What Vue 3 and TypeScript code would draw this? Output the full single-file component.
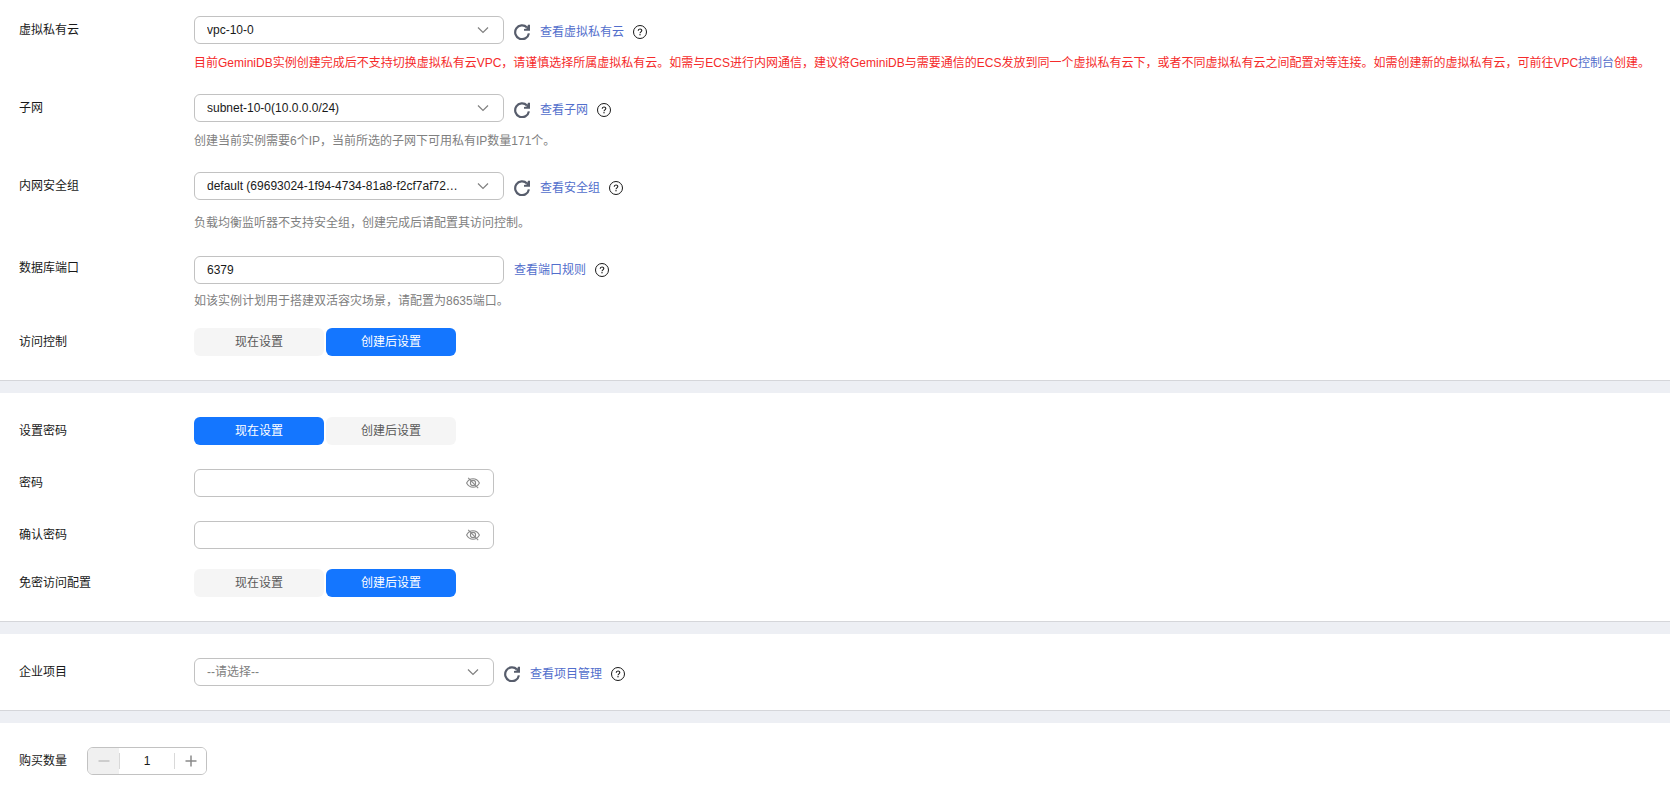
<script setup lang="ts">
import { ref } from 'vue'

type SetupTime = 'now' | 'later'

const setupOptions: { value: SetupTime; text: string }[] = [
  { value: 'now', text: '现在设置' },
  { value: 'later', text: '创建后设置' },
]

const vpc = ref('vpc-10-0')
const subnet = ref('subnet-10-0(10.0.0.0/24)')
const securityGroup = ref('default (69693024-1f94-4734-81a8-f2cf7af72…')
const port = ref('6379')
const accessControl = ref<SetupTime>('later')
const passwordSetup = ref<SetupTime>('now')
const passwordless = ref<SetupTime>('later')
const password = ref('')
const confirmPassword = ref('')
const showPassword = ref(false)
const showConfirm = ref(false)
const project = ref('')
const quantity = ref(1)
</script>

<template>
  <svg class="sprite" aria-hidden="true">
    <symbol id="icon-chevron" viewBox="0 0 12 12">
      <path d="M1 3.5 6 8.5 11 3.5" fill="none" stroke="currentColor" stroke-width="1.2" />
    </symbol>
    <symbol id="icon-refresh" viewBox="0 0 16 16">
      <path d="M13 3.4A6.9 6.9 0 1 0 14.9 9.4" fill="none" stroke="currentColor" stroke-width="2.2" />
      <path d="M16 0.8V6.8H10V5L12.6 4.4 14 0.8Z" fill="currentColor" />
    </symbol>
    <symbol id="icon-help" viewBox="0 0 14 14">
      <circle cx="7" cy="7" r="6.5" fill="none" stroke="currentColor" stroke-width="1" />
      <path d="M5.2 5.8C5.2 3.4 8.8 3.4 8.8 5.6 8.8 6.8 7 6.9 7 8.3" fill="none" stroke="currentColor" stroke-width="1.1" />
      <rect x="6.4" y="9.1" width="1.2" height="1.2" fill="currentColor" />
    </symbol>
    <symbol id="icon-eye-off" viewBox="0 0 14 12">
      <g fill="none" stroke="currentColor" stroke-width="1.1">
        <path d="M0.6 6C3.6 0.4 10.4 0.4 13.4 6 10.4 11.6 3.6 11.6 0.6 6Z" />
        <circle cx="7" cy="6" r="2.6" />
        <path d="M2.2 0.8 12.2 11.2" />
      </g>
    </symbol>
  </svg>

  <form class="page" @submit.prevent>
    <section class="panel network">
      <div class="row">
        <label class="name" for="vpc">虚拟私有云</label>
        <div class="content">
          <div class="line">
            <div class="field wide">
              <select id="vpc" v-model="vpc"><option>vpc-10-0</option></select>
              <svg class="chevron"><use href="#icon-chevron" /></svg>
            </div>
            <div class="actions low">
              <button class="icon" type="button" aria-label="刷新"><svg class="refresh"><use href="#icon-refresh" /></svg></button>
              <a href="#">查看虚拟私有云</a>
              <button class="icon" type="button" aria-label="帮助"><svg class="help"><use href="#icon-help" /></svg></button>
            </div>
          </div>
          <p class="hint warning">目前GeminiDB实例创建完成后不支持切换虚拟私有云VPC，请谨慎选择所属虚拟私有云。如需与ECS进行内网通信，建议将GeminiDB与需要通信的ECS发放到同一个虚拟私有云下，或者不同虚拟私有云之间配置对等连接。如需创建新的虚拟私有云，可前往VPC<a href="#">控制台</a>创建。</p>
        </div>
      </div>

      <div class="row">
        <label class="name" for="subnet">子网</label>
        <div class="content">
          <div class="line">
            <div class="field wide">
              <select id="subnet" v-model="subnet"><option>subnet-10-0(10.0.0.0/24)</option></select>
              <svg class="chevron"><use href="#icon-chevron" /></svg>
            </div>
            <div class="actions low">
              <button class="icon" type="button" aria-label="刷新"><svg class="refresh"><use href="#icon-refresh" /></svg></button>
              <a href="#">查看子网</a>
              <button class="icon" type="button" aria-label="帮助"><svg class="help"><use href="#icon-help" /></svg></button>
            </div>
          </div>
          <p class="hint">创建当前实例需要6个IP，当前所选的子网下可用私有IP数量171个。</p>
        </div>
      </div>

      <div class="row security">
        <label class="name" for="group">内网安全组</label>
        <div class="content">
          <div class="line">
            <div class="field wide">
              <select id="group" v-model="securityGroup"><option>default (69693024-1f94-4734-81a8-f2cf7af72…</option></select>
              <svg class="chevron"><use href="#icon-chevron" /></svg>
            </div>
            <div class="actions low">
              <button class="icon" type="button" aria-label="刷新"><svg class="refresh"><use href="#icon-refresh" /></svg></button>
              <a href="#">查看安全组</a>
              <button class="icon" type="button" aria-label="帮助"><svg class="help"><use href="#icon-help" /></svg></button>
            </div>
          </div>
          <p class="hint">负载均衡监听器不支持安全组，创建完成后请配置其访问控制。</p>
        </div>
      </div>

      <div class="row port">
        <label class="name" for="port">数据库端口</label>
        <div class="content">
          <div class="line">
            <div class="field wide"><input id="port" v-model="port" type="text" inputmode="numeric" /></div>
            <div class="actions">
              <a href="#">查看端口规则</a>
              <button class="icon" type="button" aria-label="帮助"><svg class="help"><use href="#icon-help" /></svg></button>
            </div>
          </div>
          <p class="hint">如该实例计划用于搭建双活容灾场景，请配置为8635端口。</p>
        </div>
      </div>

      <div class="row">
        <span id="access-name" class="name">访问控制</span>
        <div class="segments" role="group" aria-labelledby="access-name">
          <button v-for="o in setupOptions" :key="o.value" type="button" :class="{ active: accessControl === o.value }" :aria-pressed="accessControl === o.value" @click="accessControl = o.value"><span>{{ o.text }}</span></button>
        </div>
      </div>
    </section>

    <section class="panel">
      <div class="row">
        <span id="setup-name" class="name">设置密码</span>
        <div class="segments" role="group" aria-labelledby="setup-name">
          <button v-for="o in setupOptions" :key="o.value" type="button" :class="{ active: passwordSetup === o.value }" :aria-pressed="passwordSetup === o.value" @click="passwordSetup = o.value"><span>{{ o.text }}</span></button>
        </div>
      </div>

      <div class="row">
        <label class="name" for="password">密码</label>
        <div class="field">
          <input id="password" v-model="password" :type="showPassword ? 'text' : 'password'" autocomplete="new-password" />
          <button class="icon eye" type="button" aria-label="显示密码" @click="showPassword = !showPassword"><svg><use href="#icon-eye-off" /></svg></button>
        </div>
      </div>

      <div class="row confirm">
        <label class="name" for="confirm">确认密码</label>
        <div class="field">
          <input id="confirm" v-model="confirmPassword" :type="showConfirm ? 'text' : 'password'" autocomplete="new-password" />
          <button class="icon eye" type="button" aria-label="显示密码" @click="showConfirm = !showConfirm"><svg><use href="#icon-eye-off" /></svg></button>
        </div>
      </div>

      <div class="row">
        <span id="free-name" class="name">免密访问配置</span>
        <div class="segments" role="group" aria-labelledby="free-name">
          <button v-for="o in setupOptions" :key="o.value" type="button" :class="{ active: passwordless === o.value }" :aria-pressed="passwordless === o.value" @click="passwordless = o.value"><span>{{ o.text }}</span></button>
        </div>
      </div>
    </section>

    <section class="panel">
      <div class="row">
        <label class="name" for="project">企业项目</label>
        <div class="line">
          <div class="field">
            <select id="project" v-model="project" :class="{ empty: project === '' }"><option value="">--请选择--</option></select>
            <svg class="chevron"><use href="#icon-chevron" /></svg>
          </div>
          <div class="actions low">
            <button class="icon" type="button" aria-label="刷新"><svg class="refresh"><use href="#icon-refresh" /></svg></button>
            <a href="#">查看项目管理</a>
            <button class="icon" type="button" aria-label="帮助"><svg class="help"><use href="#icon-help" /></svg></button>
          </div>
        </div>
      </div>
    </section>

    <section class="panel">
      <div class="row">
        <label class="name short" for="quantity">购买数量</label>
        <div class="stepper">
          <button type="button" aria-label="减少" :disabled="quantity <= 1" @click="quantity--">
            <svg viewBox="0 0 12 12"><path d="M0.5 6H11.5" /></svg>
          </button>
          <input id="quantity" v-model.number="quantity" type="text" inputmode="numeric" />
          <button type="button" aria-label="增加" @click="quantity++">
            <svg viewBox="0 0 12 12"><path d="M0.5 6H11.5M6 0.5V11.5" /></svg>
          </button>
        </div>
      </div>
    </section>
  </form>
</template>

<style>
body {
  background: #fff;
}
</style>

<style scoped>
.sprite {
  position: absolute;
  width: 0;
  height: 0;
}

.page,
.page button,
.page input,
.page select {
  font-family: "Liberation Sans", "Noto Sans CJK SC", sans-serif;
  font-size: 12px;
  color: #191919;
}

.page * {
  box-sizing: border-box;
}

.panel {
  padding: 24px 19px;
  border-bottom: 1px solid #d5d6da;
  box-shadow: 0 12px 0 #edeff4;
  margin-bottom: 12px;
}

.panel.network {
  padding-top: 16px;
}

.panel:last-child {
  border-bottom: 0;
  box-shadow: none;
  margin-bottom: 0;
}

.row {
  display: flex;
  align-items: flex-start;
  margin-bottom: 24px;
}

.network .row {
  margin-bottom: 22px;
}

.network .security {
  margin-bottom: 24px;
}

.network .port {
  margin-bottom: 18px;
}

.row.confirm {
  margin-bottom: 20px;
}

.panel .row:last-child {
  margin-bottom: 0;
}

.name {
  flex: 0 0 175px;
  line-height: 28px;
}

.name.short {
  flex-basis: 68px;
}

.port .name {
  line-height: 24px;
}

.content {
  flex: 1;
  min-width: 0;
}

.line {
  display: flex;
  align-items: center;
  gap: 10px;
}

.field {
  position: relative;
  width: 300px;
  height: 28px;
}

.field.wide {
  width: 310px;
}

.field input,
.field select {
  display: block;
  width: 100%;
  height: 28px;
  padding: 0 40px 0 12px;
  border: 1px solid #c2c2c2;
  border-radius: 6px;
  background: #fff;
  outline: none;
  appearance: none;
  text-overflow: ellipsis;
}

.field select {
  padding-right: 32px;
}

.page .field select.empty {
  color: #808080;
}

.chevron {
  position: absolute;
  right: 15px;
  top: 8px;
  width: 12px;
  height: 12px;
  color: #808080;
  pointer-events: none;
}

.icon {
  display: flex;
  padding: 0;
  border: 0;
  background: none;
  cursor: pointer;
}

.page .eye {
  position: absolute;
  right: 14px;
  top: 8px;
  color: #8a8a8a;
}

.eye svg {
  width: 14px;
  height: 12px;
}

.actions {
  display: flex;
  align-items: center;
  gap: 9px;
  height: 28px;
}

.actions.low {
  padding-top: 4px;
}

.refresh {
  width: 16px;
  height: 16px;
  margin-right: 1px;
  color: #575d6c;
}

.help {
  width: 14px;
  height: 14px;
}

a {
  color: #526ecc;
  text-decoration: none;
}

.actions a {
  line-height: 18px;
}

.hint {
  margin: 10px 0 0;
  line-height: 18px;
  color: #808080;
}

.security .hint {
  margin-top: 14px;
}

.port .hint {
  margin-top: 8px;
}

.hint.warning {
  color: #f52b2b;
}

.segments {
  display: flex;
  gap: 2px;
}

.segments button {
  width: 130px;
  height: 28px;
  padding: 0;
  border: 0;
  border-radius: 6px;
  background: #f5f5f5;
  cursor: pointer;
}

.segments span {
  display: block;
  line-height: 28px;
  color: #595959;
}

.segments button.active {
  background: #1476ff;
}

.segments .active span {
  color: #fff;
}

.stepper {
  display: flex;
  align-items: center;
  width: 120px;
  height: 28px;
  border: 1px solid #c2c2c2;
  border-radius: 6px;
  overflow: hidden;
}

.stepper button {
  display: flex;
  flex: 0 0 31px;
  height: 100%;
  align-items: center;
  justify-content: center;
  padding: 0;
  border: 0;
  background: #fff;
}

.stepper button:disabled {
  background: #f0f0f0;
}

.stepper svg {
  width: 12px;
  height: 12px;
  stroke: #8a8a8a;
  stroke-width: 1.5;
  fill: none;
}

.stepper button:disabled svg {
  stroke: #c2c2c2;
}

.stepper input {
  flex: 1;
  min-width: 0;
  height: 16px;
  padding: 0;
  border: solid #d9d9d9;
  border-width: 0 1px;
  outline: none;
  text-align: center;
}
</style>
